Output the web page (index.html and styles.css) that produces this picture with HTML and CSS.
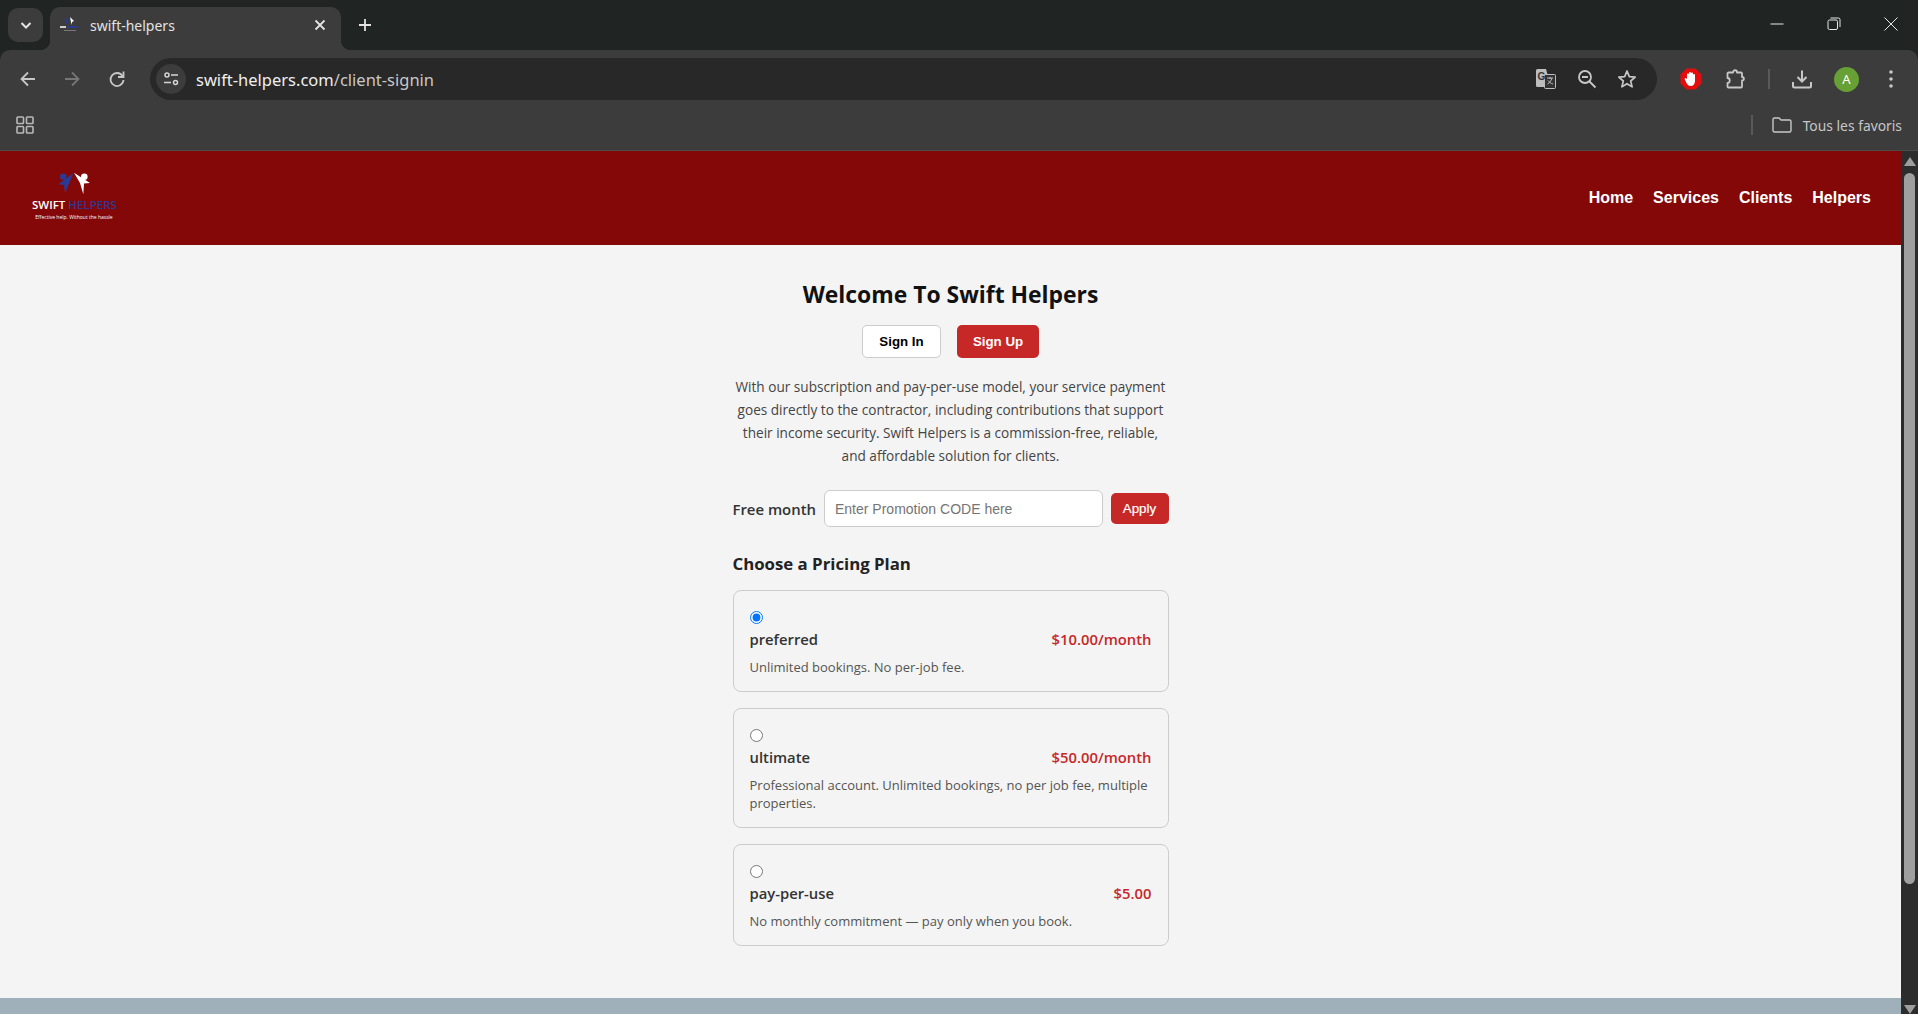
FILE: index.html
```html
<!DOCTYPE html>
<html lang="en">
<head>
    <meta charset="UTF-8">
    <meta name="viewport" content="width=device-width, initial-scale=1.0">
    <title>swift-helpers</title>
    <link rel="stylesheet" href="styles.css">
</head>

<body>
<div class="chrome">
    <div class="tabstrip">
        <div class="tab-search">
            <svg width="14" height="14" viewBox="0 0 14 14"><path d="M2.500 5 7 9.500 11.500 5" fill="none" stroke="#e3e3e3" stroke-width="2"/></svg>
        </div>
        <div class="tab">
            <svg class="tab-logo" width="20" height="18" viewBox="0 0 20 18">
                <path d="M10 1 5 5 7 5.500 7.500 9Z" fill="#2a3c90"/>
                <path d="M11 1 15 5 13 6 12.500 9Z" fill="#fff"/>
                <rect x="1" y="10" width="6" height="2" fill="#ccc"/>
                <rect x="8" y="10" width="11" height="2" fill="#2a3c90"/>
                <rect x="5" y="14" width="12" height="1" fill="#777"/>
            </svg>
            <span class="tab-title">swift-helpers</span>
            <svg class="tab-close" width="12" height="12" viewBox="0 0 12 12"><path d="M1.500 1.500 10.500 10.500M10.500 1.500 1.500 10.500" stroke="#e3e3e3" stroke-width="1.800"/></svg>
        </div>
        <svg class="new-tab" width="14" height="14" viewBox="0 0 14 14"><path d="M7 1v12M1 7h12" stroke="#e3e3e3" stroke-width="1.800"/></svg>
        <div class="window-btns">
            <svg width="14" height="14" viewBox="0 0 14 14"><path d="M0.500 7h13" stroke="#e8e8e8" stroke-width="1"/></svg>
            <svg width="14" height="14" viewBox="0 0 14 14"><rect x="1" y="3" width="9.500" height="9.500" rx="1.500" fill="none" stroke="#e8e8e8"/><path d="M3.500 1H11.500A1.500 1.500 0 0 1 13 2.500V10" fill="none" stroke="#e8e8e8"/></svg>
            <svg width="14" height="14" viewBox="0 0 14 14"><path d="M0.500 0.500 13.500 13.500M13.500 0.500 0.500 13.500" stroke="#e8e8e8" stroke-width="1"/></svg>
        </div>
    </div>
    <div class="toolbar">
        <svg class="tb-icon" width="18" height="18" viewBox="0 0 18 18"><path d="M16 9H3M9 2.500 2.500 9 9 15.500" fill="none" stroke="#c7c7c7" stroke-width="1.800"/></svg>
        <svg class="tb-icon" width="18" height="18" viewBox="0 0 18 18"><path d="M2 9H15M9 2.500 15.500 9 9 15.500" fill="none" stroke="#767676" stroke-width="1.800"/></svg>
        <svg class="tb-icon tb-reload" width="18" height="18" viewBox="0 0 18 18"><path d="M14.500 6A6.500 6.500 0 1 0 15.500 10" fill="none" stroke="#c7c7c7" stroke-width="1.800"/><path d="M15.500 1.500V7H10" fill="none" stroke="#c7c7c7" stroke-width="1.800"/></svg>
        <div class="omnibox">
            <div class="site-info">
                <svg width="16" height="16" viewBox="0 0 16 16"><circle cx="4" cy="4" r="2" fill="none" stroke="#d5d5d5" stroke-width="1.500"/><path d="M8 4h7M1 11.500h7" stroke="#d5d5d5" stroke-width="1.500"/><circle cx="12.500" cy="11.500" r="2" fill="none" stroke="#d5d5d5" stroke-width="1.500"/></svg>
            </div>
            <div class="url"><span class="url-host">swift-helpers.com</span>/client-signin</div>
            <div class="omni-actions">
                <svg width="22" height="22" viewBox="0 0 22 22"><path d="M1 2.500A1.500 1.500 0 0 1 2.500 1H11L16 19H2.500A1.500 1.500 0 0 1 1 17.500Z" fill="#bdbdbd"/><rect x="9.500" y="6.500" width="11" height="14" rx="1" fill="#333" stroke="#bdbdbd"/><path d="M12 10h6M15 9v2M17 10c-1 3-2.500 5-4.500 6M13 12.500c1 1.500 3 3 5 3.500" fill="none" stroke="#bdbdbd"/><text x="2.500" y="12" class="translate-g">G</text></svg>
                <svg width="20" height="20" viewBox="0 0 20 20"><circle cx="8" cy="8" r="6" fill="none" stroke="#c7c7c7" stroke-width="1.800"/><path d="M5 8h6M12.500 12.500 18.500 18.500" stroke="#c7c7c7" stroke-width="1.800"/></svg>
                <svg width="20" height="20" viewBox="0 0 20 20"><path d="M10 2 12.300 7.600 18.200 8.100 13.700 12 15.100 17.900 10 14.700 4.900 17.900 6.300 12 1.800 8.100 7.700 7.600Z" fill="none" stroke="#c7c7c7" stroke-width="1.700" stroke-linejoin="round"/></svg>
            </div>
        </div>
        <div class="tb-right">
            <svg width="22" height="22" viewBox="0 0 22 22"><path d="M6.500 0.500H15.500L21.500 6.500V15.500L15.500 21.500H6.500L0.500 15.500V6.500Z" fill="#e40d0d"/><path d="M7 11V6.500a1 1 0 0 1 2 0V5a1 1 0 0 1 2 0V5.500a1 1 0 0 1 2 0V7a1 1 0 0 1 2 0V13c0 3-2 5-4 5-2.500 0-3.500-1-4.500-3L4.800 11.500c-.6-1.200.8-2 1.500-1Z" fill="#fff"/></svg>
            <svg class="tb-ext" width="20" height="20" viewBox="0 0 20 20"><path d="M1.500 4.500A1 1 0 0 1 2.500 3.500H7C7 .5 11 .5 11 3.500H15A1 1 0 0 1 16 4.500V8C18.500 8 18.500 11.500 16 11.500V17.500A1 1 0 0 1 15 18.500H2.500A1 1 0 0 1 1.500 17.500V14C4.500 14 4.500 9 1.500 9Z" fill="none" stroke="#c7c7c7" stroke-width="1.800" stroke-linejoin="round"/></svg>
            <span class="tb-sep"></span>
            <svg width="20" height="20" viewBox="0 0 20 20"><path d="M10 1.500V12M5.500 8 10 12.500 14.500 8M1 13V17A1.500 1.500 0 0 0 2.500 18.500H17.500A1.500 1.500 0 0 0 19 17V13" fill="none" stroke="#c7c7c7" stroke-width="2"/></svg>
            <div class="avatar">A</div>
            <svg class="tb-dots" width="4" height="20" viewBox="0 0 4 20"><circle cx="2" cy="3" r="1.800" fill="#c7c7c7"/><circle cx="2" cy="10" r="1.800" fill="#c7c7c7"/><circle cx="2" cy="17" r="1.800" fill="#c7c7c7"/></svg>
        </div>
    </div>
    <div class="bookmarks">
        <svg width="18" height="18" viewBox="0 0 18 18"><g fill="none" stroke="#b8b8b8" stroke-width="1.600"><rect x="1" y="1" width="6.500" height="6.500" rx="0.800"/><rect x="10.500" y="1" width="6.500" height="6.500" rx="0.800"/><rect x="1" y="10.500" width="6.500" height="6.500" rx="0.800"/><rect x="10.500" y="10.500" width="6.500" height="6.500" rx="0.800"/></g></svg>
        <div class="bm-right">
            <span class="tb-sep"></span>
            <svg width="20" height="16" viewBox="0 0 20 16"><path d="M1 2.500A1.500 1.500 0 0 1 2.500 1H7L9 3H17.500A1.500 1.500 0 0 1 19 4.500V13.500A1.500 1.500 0 0 1 17.500 15H2.500A1.500 1.500 0 0 1 1 13.500Z" fill="none" stroke="#c7c7c7" stroke-width="1.400"/></svg>
            <span class="bm-label">Tous les favoris</span>
        </div>
    </div>
</div>

<div class="viewport">
    <div class="page">
        <header class="site-header">
            <div class="logo">
                <svg width="38" height="24" viewBox="0 0 38 24">
                    <circle cx="7.300" cy="5.700" r="3.300" fill="#2a3a94"/>
                    <path d="M17.300 2.300 2.300 13.300 8 14 9 22.300Z" fill="#2a3a94"/>
                    <circle cx="28.300" cy="5.700" r="3.300" fill="#fff"/>
                    <path d="M18 1.700 34 12 28 12.500 27.300 23.300 24 12Z" fill="#fff"/>
                </svg>
                <div class="logo-name">SWIFT <span class="logo-blue">HELPERS</span></div>
                <div class="logo-tag">Effective help. Without the hassle</div>
            </div>
            <nav class="site-nav">
                <a href="#">Home</a>
                <a href="#">Services</a>
                <a href="#">Clients</a>
                <a href="#">Helpers</a>
            </nav>
        </header>

        <main class="signin">
            <h1>Welcome To Swift Helpers</h1>
            <div class="auth-tabs">
                <button class="btn-outline">Sign In</button>
                <button class="btn-red">Sign Up</button>
            </div>
            <p class="intro">With our subscription and pay-per-use model, your service payment goes directly to the contractor, including contributions that support their income security. Swift Helpers is a commission-free, reliable, and affordable solution for clients.</p>

            <div class="promo">
                <label class="promo-label">Free month</label>
                <input type="text" class="promo-input" placeholder="Enter Promotion CODE here">
                <button class="btn-red btn-apply">Apply</button>
            </div>

            <h2>Choose a Pricing Plan</h2>

            <label class="plan">
                <input type="radio" name="plan" checked>
                <div class="plan-head"><span class="plan-name">preferred</span><span class="plan-price">$10.00/month</span></div>
                <p class="plan-desc">Unlimited bookings. No per-job fee.</p>
            </label>
            <label class="plan">
                <input type="radio" name="plan">
                <div class="plan-head"><span class="plan-name">ultimate</span><span class="plan-price">$50.00/month</span></div>
                <p class="plan-desc">Professional account. Unlimited bookings, no per job fee, multiple properties.</p>
            </label>
            <label class="plan">
                <input type="radio" name="plan">
                <div class="plan-head"><span class="plan-name">pay-per-use</span><span class="plan-price">$5.00</span></div>
                <p class="plan-desc">No monthly commitment — pay only when you book.</p>
            </label>
        </main>
        <div class="site-footer"></div>
    </div>
    <div class="scrollbar">
        <span class="arrow-up"></span>
        <div class="thumb"></div>
        <span class="arrow-down"></span>
    </div>
</div>
</body>
</html>
```

FILE: styles.css
```css
* {
    box-sizing: border-box;
    margin: 0;
    padding: 0;
}

html, body {
    height: 100%;
    overflow: hidden;
}

body {
    background: #f4f4f4;
    color: #333;
    font-family: "Open Sans", "Noto Sans", sans-serif;
    display: flex;
    flex-direction: column;
}

/* browser frame */
.chrome {
    flex: none;
    background: #202423;
    font-family: "Noto Sans", "Open Sans", sans-serif;
}

.tabstrip {
    height: 50px;
    display: flex;
    align-items: flex-start;
    padding: 8px 0 0 8px;
}

.tab-search {
    width: 35px;
    height: 34px;
    border-radius: 10px;
    background: #3c3c3c;
    display: flex;
    align-items: center;
    justify-content: center;
}

.tab {
    position: relative;
    width: 291px;
    height: 43px;
    margin: -1px 0 0 7px;
    background: #3c3c3c;
    border-radius: 10px 10px 0 0;
    display: flex;
    align-items: center;
    padding: 0 0 7px 9px;
    color: #e3e3e3;
    font-size: 14px;
}

.tab::before, .tab::after {
    content: "";
    position: absolute;
    bottom: 0;
    width: 10px;
    height: 10px;
}

.tab::before {
    left: -10px;
    background: radial-gradient(circle at 0 0, transparent 10px, #3c3c3c 10.5px);
}

.tab::after {
    right: -10px;
    background: radial-gradient(circle at 100% 0, transparent 10px, #3c3c3c 10.5px);
}

.tab-logo {
    flex: none;
}

.tab-title {
    margin-left: 11px;
    flex: 1;
}

.tab-close {
    margin-right: 15px;
}

.new-tab {
    margin: 10px 0 0 17px;
}

.window-btns {
    margin-left: auto;
    display: flex;
    gap: 43px;
    padding: 9px 20px 0 0;
}

.toolbar {
    height: 54px;
    background: #3c3c3c;
    display: flex;
    align-items: center;
    padding: 4px 0 0 19px;
    gap: 26px;
    border-radius: 10px 10px 0 0;
}

.tb-icon {
    flex: none;
}

.tb-reload {
    margin-left: 1px;
}

.omnibox {
    flex: none;
    width: 1507px;
    height: 42px;
    margin-left: -2px;
    background: #282828;
    border-radius: 21px;
    display: flex;
    align-items: center;
    padding: 0 20px 0 6px;
}

.site-info {
    width: 30px;
    height: 30px;
    border-radius: 50%;
    background: #3c3c3c;
    display: flex;
    align-items: center;
    justify-content: center;
}

.url {
    margin-left: 10px;
    color: #c7c7c7;
    font-size: 16.500px;
}

.url-host {
    color: #efefef;
}

.omni-actions {
    margin-left: auto;
    display: flex;
    align-items: center;
    gap: 20px;
}

.translate-g {
    font: bold 10px "Liberation Sans", sans-serif;
    fill: #333;
}

.tb-right {
    display: flex;
    align-items: center;
    gap: 22px;
    margin-left: -3px;
}

.tb-ext {
    margin-left: 2px;
}

.tb-dots {
    margin-left: 8px;
}

.tb-sep {
    display: block;
    width: 2px;
    height: 20px;
    background: #5a5a5a;
}

.avatar {
    width: 25px;
    height: 25px;
    border-radius: 50%;
    background: #67a035;
    color: #fff;
    font-size: 13px;
    text-align: center;
    line-height: 25px;
}

.bookmarks {
    height: 47px;
    background: #3c3c3c;
    border-bottom: 1px solid #4a4a4a;
    display: flex;
    align-items: center;
    padding: 0 16px 4px 16px;
}

.bm-right {
    margin-left: auto;
    display: flex;
    align-items: center;
    gap: 19px;
}

.bm-label {
    color: #c7c7c7;
    font-size: 13.850px;
    margin-left: -8px;
}

/* page area */
.viewport {
    flex: 1;
    min-height: 0;
    display: flex;
}

.page {
    flex: 1;
    display: flex;
    flex-direction: column;
    min-width: 0;
    overflow: hidden;
}

.site-header {
    flex: none;
    height: 94px;
    background: #840808;
    display: flex;
    align-items: center;
    justify-content: space-between;
    padding: 0 30px 0 32px;
}

.logo {
    width: 84px;
    margin-bottom: 4px;
    text-align: center;
    color: #fff;
}

.logo svg {
    display: block;
    margin-left: 24px;
}

.logo-name {
    font: 600 11.500px/14px "Open Sans", sans-serif;
    white-space: nowrap;
    margin-top: 3px;
}

.logo-blue {
    color: #2a3a94;
}

.logo-tag {
    font: 5px/7px "Open Sans", sans-serif;
    white-space: nowrap;
    margin-top: 2px;
}

.site-nav {
    display: flex;
    gap: 20px;
    margin-top: -1px;
}

.site-nav a {
    color: #fff;
    text-decoration: none;
    font: 700 16px "Liberation Sans", Arial, sans-serif;
}

.signin {
    flex: 1;
    width: 436px;
    margin: 0 auto;
    padding-top: 34px;
}

h1 {
    font-size: 22.900px;
    font-weight: 700;
    color: #111;
    text-align: center;
    line-height: 32px;
}

.auth-tabs {
    display: flex;
    justify-content: center;
    gap: 16px;
    margin-top: 14px;
}

button {
    font: 700 13.300px "Liberation Sans", Arial, sans-serif;
    border-radius: 5px;
    height: 33px;
    cursor: pointer;
}

.btn-outline {
    width: 79px;
    background: #fff;
    color: #000;
    border: 1px solid #ccc;
}

.btn-red {
    width: 82px;
    background: #c62828;
    color: #fff;
    border: none;
}

.intro {
    margin-top: 17px;
    font-size: 13.600px;
    line-height: 23px;
    color: #444;
    text-align: center;
}

.promo {
    display: flex;
    align-items: center;
    margin-top: 23px;
}

.promo-label {
    font-size: 14.900px;
    font-weight: 600;
    margin-right: 8px;
    white-space: nowrap;
}

.promo-input {
    flex: 1;
    min-width: 0;
    height: 37px;
    padding: 0 10px;
    border: 1px solid #ccc;
    border-radius: 6px;
    background: #fff;
    font: 14px "Liberation Sans", Arial, sans-serif;
}

.promo-input::placeholder {
    color: #757575;
}

.btn-apply {
    width: 58px;
    height: 31px;
    margin-left: 8px;
    font-weight: 400;
    -webkit-text-stroke: 0.2px #fff;
}

h2 {
    margin-top: 25px;
    margin-bottom: 14px;
    font-size: 16.800px;
    font-weight: 700;
    color: #222;
    line-height: 24px;
}

.plan {
    display: block;
    border: 1px solid #ccc;
    border-radius: 8px;
    padding: 16px 16px 15px;
    margin-bottom: 16px;
}

.plan input {
    display: block;
    width: 13px;
    height: 13px;
    margin: 4px 0 5px 0;
    accent-color: #0075ff;
}

.plan-head {
    display: flex;
    justify-content: space-between;
    align-items: center;
    font-size: 14.800px;
    font-weight: 600;
    line-height: 21px;
}

.plan-price {
    color: #c62828;
}

.plan-desc {
    margin-top: 8px;
    font-size: 13px;
    line-height: 18px;
    color: #555;
}

.site-footer {
    flex: none;
    height: 16px;
    background: #a0b0bb;
}

.scrollbar {
    flex: none;
    width: 17px;
    background: #2c2c2c;
    display: flex;
    flex-direction: column;
    align-items: center;
    padding-top: 6px;
}

.arrow-up, .arrow-down {
    flex: none;
    width: 0;
    height: 0;
    border-left: 6.500px solid transparent;
    border-right: 6.500px solid transparent;
}

.arrow-up {
    border-bottom: 9px solid #9d9d9d;
}

.arrow-down {
    border-top: 9px solid #9d9d9d;
}

.thumb {
    width: 11px;
    height: 711px;
    margin-top: 7px;
    margin-bottom: auto;
    border-radius: 6px;
    background: #9f9f9f;
}
```
